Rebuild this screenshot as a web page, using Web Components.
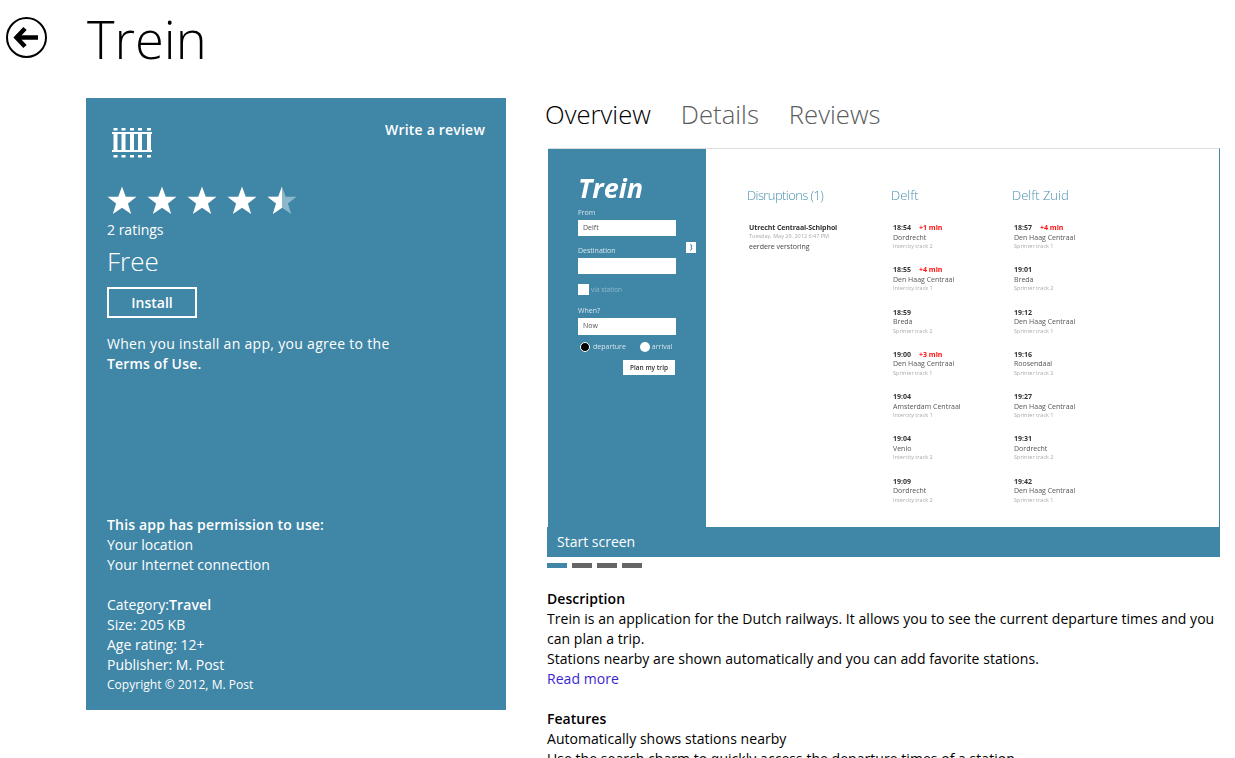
<!DOCTYPE html>
<html><head><meta charset="utf-8"><style>
html,body{margin:0;height:758px;overflow:hidden;background:#fff}
body{font-family:"Open Sans","Noto Sans",sans-serif;color:#000}
</style></head><body>
<store-page></store-page>
<script>
const FONT='"Open Sans","Noto Sans",sans-serif';
function def(name,css,html){
  customElements.define(name,class extends HTMLElement{
    connectedCallback(){
      if(this.shadowRoot)return;
      const s=this.attachShadow({mode:'open'});
      s.innerHTML='<style>'+css+'</style>'+(typeof html==='function'?html(this):html);
    }
  });
}
def('star-rating',`:host{display:flex;gap:10px;height:30px}svg{width:30px;height:30px;display:block}`,
 ()=>{const p='M16 1.5 L20 12.6 L31.5 12.6 L22.3 19.6 L25.8 31 L16 24.2 L6.2 31 L9.7 19.6 L.5 12.6 L12 12.6Z';
  let o='';for(let i=0;i<4;i++)o+=`<svg viewBox="0 0 32 32"><path fill="#fff" d="${p}"/></svg>`;
  o+=`<svg viewBox="0 0 32 32"><path fill="#fff" fill-opacity=".4" d="${p}"/><path fill="#fff" d="M16 1.5V24.2L6.2 31 L9.7 19.6 L.5 12.6 L12 12.6Z"/></svg>`;return o;});
def('rail-icon',`:host{display:block;width:40px;height:30px}svg{display:block}`,
 ()=>{const xs=[1.5,9.5,18,26,35];
  return `<svg width="40" height="30" viewBox="0 0 40 30" fill="#fff"><rect y="4" width="40" height="2"/><rect y="22" width="40" height="2"/>`+
  xs.map(x=>`<rect x="${x}" y="0" width="4" height="2.5"/><rect x="${x}" y="6" width="4" height="16"/><rect x="${x}" y="27" width="4" height="2.5"/>`).join('')+`</svg>`;});
def('app-header',`:host{display:flex;height:98px;align-items:flex-start}
 .b{width:42px;height:42px;margin:17px 0 0 6px;flex:none}
 h1{margin:0 0 0 39px;font:300 52.5px/78px ${FONT}}`,
 `<svg class="b" viewBox="0 0 42 42"><circle cx="20.5" cy="20.5" r="19.5" fill="none" stroke="#000" stroke-width="2"/><path d="M19 11.5 L10.5 20.5 L19 29.5" fill="none" stroke="#000" stroke-width="4.5"/><path d="M12 20.5H32" fill="none" stroke="#000" stroke-width="4.5"/></svg><h1>Trein</h1>`);
def('info-panel',`:host{display:flex;flex-direction:column;box-sizing:border-box;width:420px;height:612px;background:#4086a6;color:#fff;padding:30px 21px 15px;font:14px/20px ${FONT}}
 .top{display:flex;justify-content:space-between;align-items:flex-start}
 .r{font-weight:600;margin-top:-8px;letter-spacing:.2px}
 star-rating{margin-top:27px}
 .ic{margin-left:5px}
 .rt{margin-top:5px}
 .free{font:300 26px/34px ${FONT};margin-top:4px}
 .ins{box-sizing:border-box;width:90px;height:31px;border:2px solid #fff;text-align:center;font-weight:600;line-height:28px;margin-top:9px}
 .terms{margin-top:16px;letter-spacing:.3px}
 b{font-weight:600;letter-spacing:.17px}
 .sp{flex:1}
 .gap{height:20px}
 .c{font-size:12px;letter-spacing:.03px}`,
 `<div class="top"><rail-icon class="ic"></rail-icon><div class="r">Write a review</div></div>
 <star-rating></star-rating>
 <div class="rt">2 ratings</div>
 <div class="free">Free</div>
 <div class="ins">Install</div>
 <div class="terms">When you install an app, you agree to the<br><b>Terms of Use.</b></div>
 <div class="sp"></div>
 <div><b>This app has permission to use:</b></div><div>Your location</div><div>Your Internet connection</div>
 <div class="gap"></div>
 <div>Category:<b>Travel</b></div><div>Size: 205 KB</div><div>Age rating: 12+</div><div>Publisher: M. Post</div><div class="c">Copyright © 2012, M. Post</div>`);
def('tab-bar',`:host{display:flex;gap:30px;height:50px;margin:-1px 0 1px -2px;font:300 25.7px/36px ${FONT};color:#5c5c5c}.a{color:#000}`,
 `<span class="a">Overview</span><span>Details</span><span>Reviews</span>`);
def('train-entry',`:host{display:block;height:42.3px;padding-left:2px;font:7px/9.5px ${FONT};color:#555}
 .t{font-weight:700;color:#333}.d{color:#f11;font-weight:700;margin-left:8px}.s{font-size:5.5px;color:#aaa}`,
 h=>`<div><span class="t">${h.getAttribute('t')}</span>${h.getAttribute('d')?`<span class="d">${h.getAttribute('d')}</span>`:''}</div><div>${h.getAttribute('n')}</div><div class="s">${h.getAttribute('s')}</div>`);
def('train-col',`:host{display:block;width:121px}
 h3{margin:0 0 19px;font:300 13px/18px ${FONT};color:#4a90b0}`,
 h=>`<h3>${h.getAttribute('title')}</h3><slot></slot>`);
def('app-shot',`:host{display:flex;box-sizing:border-box;width:672px;height:379px;margin-left:1px;border-top:1px solid #ddd;border-right:1px solid #4086a6;background:#fff;font:7px/10px ${FONT}}
 .l{box-sizing:border-box;width:158px;background:#4086a6;color:#d6e6ee;padding:24px 0 0 30px;flex:none;position:relative}
 .in{filter:blur(.3px)}
 .logo{font:italic 700 27px/30px ${FONT};color:#fff}
 .lb{margin-top:4px;line-height:11px}
 .f{width:98px;height:16px;background:#fff;color:#555;box-sizing:border-box;padding:0 5px;line-height:16px;margin:2px 0 0}
 .via{display:flex;align-items:center;gap:2px;margin:10px 0 10px;color:#8fbacd;font-size:6.5px}
 .cb{width:11px;height:11px;background:#fff}
 .rad{display:flex;align-items:center;margin:3px 0 0 2px;height:18px}
 .o{width:10px;height:10px;border-radius:50%;background:#fff;margin-right:2px}
 .o.on{box-sizing:border-box;background:#000;border:1.5px solid #fff;margin-right:3px}
 .sw{margin-left:14px}
 .plan{width:52px;height:15px;background:#fff;color:#333;text-align:center;line-height:15px;margin:4px 0 0 45px;font-weight:600;font-size:6.5px}
 .sq{position:absolute;left:138px;top:93px;width:10px;height:11px;background:#fff}
 .sq svg{display:block}
 .m{padding:37px 0 0 41px;display:flex;filter:blur(.3px)}
 .dis{width:144px}
 .dis h3{margin:0 0 19px;font:300 13px/18px ${FONT};color:#4a90b0;letter-spacing:-.6px}
 .dt{margin-left:2px;color:#444;line-height:9.3px}.dt b{font-weight:700;letter-spacing:-.1px;color:#333}.dt small{display:block;font-size:5.5px;color:#aaa}`,
 `<div class="l"><div class="in"><div class="logo">Trein</div><div class="lb">From</div><div class="f">Delft</div>
 <div class="lb" style="margin-top:9px">Destination</div><div class="f"></div>
 <div class="via"><span class="cb"></span>via station</div>
 <div class="lb">When?</div><div class="f" style="height:17px;margin-top:2px">Now</div>
 <div class="rad"><span class="o on"></span>departure<span class="o sw"></span>arrival</div>
 <div class="plan">Plan my trip</div></div><div class="sq"><svg width="10" height="11" viewBox="0 0 10 11"><path d="M4 2.5 L6 3.5 L5 5 L6 7 L4 8.5" fill="none" stroke="#4086a6" stroke-width="1"/></svg></div></div>
 <div class="m"><div class="dis"><h3>Disruptions (1)</h3><div class="dt"><b>Utrecht Centraal-Schiphol</b><small>Tuesday, May 29, 2012 6:47 PM</small>eerdere verstoring</div></div><slot></slot></div>`);
def('shot-carousel',`:host{display:block}
 .cap{box-sizing:border-box;height:30px;width:673px;background:#4086a6;color:#fff;padding-left:10px;font:14px/30px ${FONT}}
 .dots{display:flex;gap:5px;margin-top:6px;height:5px}.dots i{width:20px;background:#666}.dots i:first-child{background:#4086a6}`,
 `<slot></slot><div class="cap">Start screen</div><div class="dots"><i></i><i></i><i></i><i></i></div>`);
def('text-section',`:host{display:block;font:14px/20px ${FONT};color:#000;margin-bottom:20px;letter-spacing:.04px}
 .h{font-weight:600}`,h=>`<div class="h">${h.getAttribute('h')}</div><slot></slot>`);
def('store-page',`:host{display:block;width:1235px;height:758px;overflow:hidden}
 .main{display:flex;padding-left:86px}
 .right{margin-left:41px;width:680px;min-width:0}
 .txt{margin-top:21px}`,
 ()=>{
  const A=[['18:54','+1 min','Dordrecht','Intercity track 2'],['18:55','+4 min','Den Haag Centraal','Intercity track 1'],['18:59','','Breda','Sprinter track 2'],['19:00','+3 min','Den Haag Centraal','Sprinter track 1'],['19:04','','Amsterdam Centraal','Intercity track 1'],['19:04','','Venlo','Intercity track 2'],['19:09','','Dordrecht','Intercity track 2']];
  const B=[['18:57','+4 min','Den Haag Centraal','Sprinter track 1'],['19:01','','Breda','Sprinter track 2'],['19:12','','Den Haag Centraal','Sprinter track 1'],['19:16','','Roosendaal','Sprinter track 2'],['19:27','','Den Haag Centraal','Sprinter track 1'],['19:31','','Dordrecht','Sprinter track 2'],['19:42','','Den Haag Centraal','Sprinter track 1']];
  const col=(t,r)=>`<train-col title="${t}">`+r.map(x=>`<train-entry t="${x[0]}" d="${x[1]}" n="${x[2]}" s="${x[3]}"></train-entry>`).join('')+`</train-col>`;
  return `<app-header></app-header><div class="main"><info-panel></info-panel><div class="right"><tab-bar></tab-bar>
  <shot-carousel><app-shot>${col('Delft',A)}${col('Delft Zuid',B)}</app-shot></shot-carousel>
  <div class="txt"><text-section h="Description">Trein is an application for the Dutch railways. It allows you to see the current departure times and you<br>can plan a trip.<br>Stations nearby are shown automatically and you can add favorite stations.<br><span style="color:#3a1fd0">Read more</span></text-section>
  <text-section h="Features">Automatically shows stations nearby<br>Use the search charm to quickly access the departure times of a station</text-section></div></div></div>`;
 });
</script></body></html>
